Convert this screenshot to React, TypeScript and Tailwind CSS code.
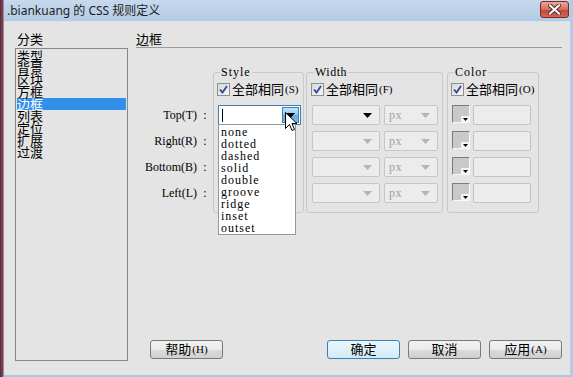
import React from "react";

const SERIF = "font-['Liberation_Serif',serif] text-[12px]";

function Check({ label, hot }: { label: string; hot: string }) {
  return (
    <div className="flex items-center h-[13px] whitespace-nowrap">
      <div className="shrink-0 w-[13px] h-[13px] border border-[#8e8f8f] bg-[linear-gradient(135deg,#d8d8d8,#f6f6f6)] flex items-center justify-center">
        <svg width="9" height="9" viewBox="0 0 9 9">
          <path d="M1 4.5 L3.5 7.5 L8 1" fill="none" stroke="#2a47a0" strokeWidth="1.8" />
        </svg>
      </div>
      <span className="ml-[2px] text-[13px] leading-[13px] text-black">{label}</span>
      <span className="font-['Liberation_Serif',serif] text-[11px] leading-[13px] text-black ml-[1px]">({hot})</span>
    </div>
  );
}

function Arrow({ color }: { color: string }) {
  return (
    <svg width="9" height="5" viewBox="0 0 9 5">
      <path d="M0 0 L9 0 L4.5 5 Z" fill={color} />
    </svg>
  );
}

function DisCombo({ w, text, dark }: { w: string; text?: string; dark?: boolean }) {
  return (
    <div className={`${w} h-[20px] border border-[#c6c6c6] rounded-[2px] bg-[#ececec] flex items-center justify-between pl-[4px] pr-[7px]`}>
      <span className={`${SERIF} tracking-[0.5px] text-[#a0a0a0] leading-[12px]`}>{text ?? ""}</span>
      <Arrow color={dark ? "#000" : "#b4b4b4"} />
    </div>
  );
}

function Swatch() {
  return (
    <div className="w-[18px] h-[18px] border border-t-[#7c7c7c] border-l-[#7c7c7c] border-r-[#f8f8f8] border-b-[#f8f8f8] bg-[#c9c9c9] flex items-end justify-end">
      <div className="w-[8px] h-[6px] bg-[#f4f4f4] flex items-end justify-center pb-[1px]">
        <svg width="5" height="3" viewBox="0 0 5 3">
          <path d="M0 0 L5 0 L2.5 3 Z" fill="#000" />
        </svg>
      </div>
    </div>
  );
}

function Btn({ label, hot, primary }: { label: string; hot?: string; primary?: boolean }) {
  return (
    <div
      className={`w-[73px] h-[19px] rounded-[3px] border flex items-center justify-center ${
        primary
          ? "border-[#3c7fb1] bg-[linear-gradient(#eaf6fd,#d2ebf8)]"
          : "border-[#7a7a7a] bg-[linear-gradient(#f2f2f2,#ebebeb_50%,#dcdcdc_51%,#cfcfcf)]"
      }`}
    >
      <span className="text-[13px] leading-[13px] text-black">{label}</span>
      {hot && <span className="font-['Liberation_Serif',serif] text-[11px] leading-[13px] text-black ml-[1px]">({hot})</span>}
    </div>
  );
}

export default function App() {
  const cats = ["类型", "背景", "区块", "方框", "边框", "列表", "定位", "扩展", "过渡"];
  const styles = ["none", "dotted", "dashed", "solid", "double", "groove", "ridge", "inset", "outset"];
  const labels = ["Top(T)", "Right(R)", "Bottom(B)", "Left(L)"];
  const rows = [0, 1, 2, 3];

  return (
    <div className="w-[573px] h-[377px] flex overflow-hidden bg-[#e4e4e4] font-['Noto_Sans','Noto_Sans_CJK_SC',sans-serif]">
      <div className="w-[3px] h-full bg-[linear-gradient(90deg,#3a3a3a,#b0305a)]" />
      <div className="flex-1 flex flex-col border-l border-[#8e8e8e] border-r-[3px] border-r-[#b3cbe4] border-b-[2px] border-b-[#a9c6e2]">
        {/* title bar */}
        <div className="h-[21px] flex items-center justify-between bg-[linear-gradient(#c6d9ed,#b4cbe4)] pl-[3px] pr-[1px]">
          <span className="text-[12px] leading-[14px] text-[#1e1e1e]">.biankuang 的 CSS 规则定义</span>
          <div className="w-[29px] h-[17px] mb-[2px] rounded-[3px] border border-[#7a2a22] bg-[linear-gradient(#e9a99b,#d26b5c_50%,#c0453a_51%,#d0685a)] flex items-center justify-center">
            <svg width="13" height="11" viewBox="0 0 13 11">
              <path d="M2 1.5 L11 9.5 M11 1.5 L2 9.5" stroke="#5a2a26" strokeWidth="4" strokeLinecap="square" />
              <path d="M2 1.5 L11 9.5 M11 1.5 L2 9.5" stroke="#ffffff" strokeWidth="2" strokeLinecap="square" />
            </svg>
          </div>
        </div>
        {/* body */}
        <div className="flex-1 flex pl-[11px] pt-[9px] border-t border-[#d6e2ee]">
          {/* categories */}
          <div className="w-[113px] flex flex-col">
            <div className="h-[17px] pl-[2px] text-[13px] leading-[16px] text-black">分类</div>
            <div className="h-[313px] border border-[#828790] p-[1px]">
              {cats.map((c) => (
                <div
                  key={c}
                  className={`h-[12px] text-[13px] leading-[12px] ${c === "边框" ? "bg-[#3390ea] text-white" : "text-black"}`}
                >
                  {c}
                </div>
              ))}
            </div>
          </div>
          {/* right panel */}
          <div className="w-[426px] ml-[8px] flex flex-col pb-[16px]">
            <div className="h-[17px] border-b border-[#9a9a9a] text-[13px] leading-[16px] text-black">边框</div>
            <div className="flex items-start mt-[18px]">
              {/* labels */}
              <div className="w-[77px] pt-[39px] flex flex-col gap-[6px]">
                {labels.map((l) => (
                  <div key={l} className="h-[20px] flex items-center justify-end">
                    <span className={`${SERIF} leading-[12px] text-black`}>{l}</span>
                    <span className={`${SERIF} leading-[12px] w-[16px] text-center text-black`}>:</span>
                  </div>
                ))}
              </div>
              {/* Style */}
              <fieldset className="w-[91px] border border-[#c9c9c9] rounded-[3px] pl-[3px] pb-[9px]">
                <legend className={`${SERIF} tracking-[1px] ml-[3px] px-[1px] leading-[12px] text-black`}>Style</legend>
                <div className="mt-[5px]">
                  <Check label="全部相同" hot="S" />
                </div>
                <div className="mt-[9px] flex flex-col gap-[6px] pl-[1px]">
                  <div className="relative w-[83px] h-[20px]">
                    <div className="w-[83px] h-[20px] border border-[#3c7fb1] bg-white flex items-center justify-between pl-[3px] pr-[1px]">
                      <div className="w-[1px] h-[13px] bg-black" />
                      <div className="w-[17px] h-[16px] border border-[#3c7fb1] bg-[linear-gradient(#c4e5fa,#8ac6ee_50%,#62ace0_51%,#7dbbe6)] flex items-center justify-center">
                        <Arrow color="#000" />
                      </div>
                    </div>
                    <div className="absolute left-0 top-[19px] w-[78px] h-[111px] border border-[#979797] bg-white pl-[2px] pt-[1px] z-10">
                      {styles.map((s) => (
                        <div key={s} className={`${SERIF} tracking-[1px] h-[12px] leading-[12px] text-black`}>
                          {s}
                        </div>
                      ))}
                    </div>
                    <svg className="absolute left-[67px] top-[7px] z-20" width="13" height="20" viewBox="0 0 13 20">
                      <path d="M0.5 0.5 L0.5 16.5 L4.5 12.5 L7 18.5 L9.5 17.5 L7 11.5 L12 11.5 Z" fill="#fff" stroke="#000" strokeWidth="1" strokeLinejoin="miter" />
                    </svg>
                  </div>
                  <div className="h-[20px]" />
                  <div className="h-[20px]" />
                  <div className="h-[20px]" />
                </div>
              </fieldset>
              {/* Width */}
              <fieldset className="w-[137px] ml-[2px] border border-[#c9c9c9] rounded-[3px] pl-[4px] pb-[9px]">
                <legend className={`${SERIF} tracking-[0.5px] ml-[3px] px-[1px] leading-[12px] text-black`}>Width</legend>
                <div className="mt-[5px]">
                  <Check label="全部相同" hot="F" />
                </div>
                <div className="mt-[9px] flex flex-col gap-[6px] pl-[1px]">
                  {rows.map((r) => (
                    <div key={r} className="flex gap-[4px] h-[20px]">
                      <DisCombo w="w-[68px]" dark={r === 0} />
                      <DisCombo w="w-[54px]" text="px" />
                    </div>
                  ))}
                </div>
              </fieldset>
              {/* Color */}
              <fieldset className="w-[92px] ml-[4px] border border-[#c9c9c9] rounded-[3px] pl-[3px] pb-[9px]">
                <legend className={`${SERIF} tracking-[1px] ml-[3px] px-[1px] leading-[12px] text-black`}>Color</legend>
                <div className="mt-[5px]">
                  <Check label="全部相同" hot="O" />
                </div>
                <div className="mt-[9px] flex flex-col gap-[6px] pl-[1px]">
                  {rows.map((r) => (
                    <div key={r} className="flex items-start gap-[3px] h-[20px]">
                      <Swatch />
                      <div className="w-[58px] h-[20px] border border-[#c3c3c3] rounded-[2px] bg-[#ececec]" />
                    </div>
                  ))}
                </div>
              </fieldset>
            </div>
            <div className="mt-auto flex">
              <div className="ml-[14px]">
                <Btn label="帮助" hot="H" />
              </div>
              <div className="ml-[104px]">
                <Btn label="确定" primary />
              </div>
              <div className="ml-[8px]">
                <Btn label="取消" />
              </div>
              <div className="ml-[8px]">
                <Btn label="应用" hot="A" />
              </div>
            </div>
          </div>
        </div>
      </div>
    </div>
  );
}
